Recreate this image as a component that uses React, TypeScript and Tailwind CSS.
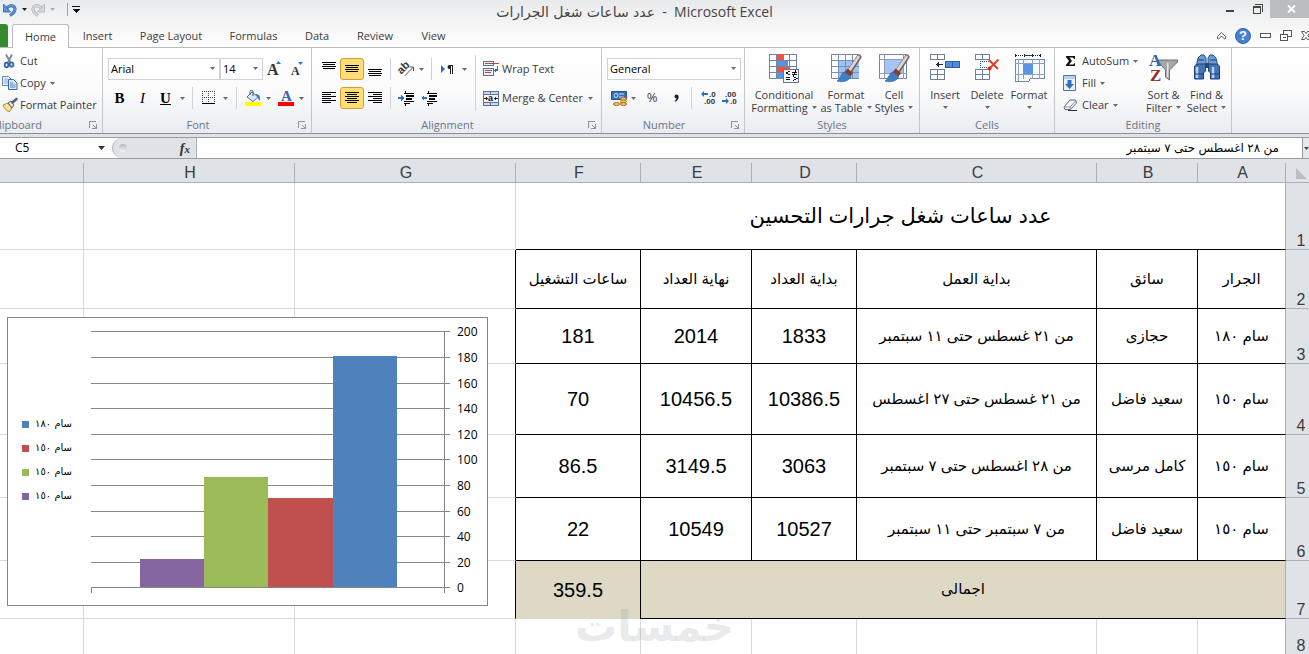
import { useState, type ReactNode } from "react";

const ARABIC = "font-['Liberation_Sans','DejaVu_Sans',sans-serif]";

const tabs = [
  { name: "Insert", width: "w-[57px]" },
  { name: "Page Layout", width: "w-[90px]" },
  { name: "Formulas", width: "w-[75px]" },
  { name: "Data", width: "w-[52px]" },
  { name: "Review", width: "w-[64px]" },
  { name: "View", width: "w-[53px]" },
];

const columns = ["A", "B", "C", "D", "E", "F", "G", "H", ""];

const rows = [
  {
    id: 3,
    height: "h-[55px]",
    cells: ["سام ١٨٠", "حجازى", "من ٢١ غسطس حتى ١١ سبتمبر", "1833", "2014", "181"],
  },
  {
    id: 4,
    height: "h-[71px]",
    cells: ["سام ١٥٠", "سعيد فاضل", "من ٢١ غسطس حتى ٢٧ اغسطس", "10386.5", "10456.5", "70"],
  },
  {
    id: 5,
    height: "h-[63px]",
    cells: ["سام ١٥٠", "كامل مرسى", "من ٢٨ اغسطس حتى ٧ سبتمبر", "3063", "3149.5", "86.5"],
  },
  {
    id: 6,
    height: "h-[63px]",
    cells: ["سام ١٥٠", "سعيد فاضل", "من ٧ سبتمبر حتى ١١ سبتمبر", "10527", "10549", "22"],
  },
];

const series = [
  { name: "سام ١٨٠", value: 181, color: "#4f81bd", x: 326, w: 64 },
  { name: "سام ١٥٠", value: 70, color: "#c0504d", x: 261, w: 65 },
  { name: "سام ١٥٠", value: 86.5, color: "#9bbb59", x: 197, w: 64 },
  { name: "سام ١٥٠", value: 22, color: "#8566a0", x: 133, w: 64 },
];

function Svg({ w, h, crisp, children }: { w: number; h: number; crisp?: boolean; children: ReactNode }) {
  return (
    <svg
      width={w}
      height={h}
      viewBox={`0 0 ${w} ${h}`}
      fill="none"
      className="shrink-0 overflow-visible"
      shapeRendering={crisp ? "crispEdges" : "auto"}
      aria-hidden="true"
    >
      {children}
    </svg>
  );
}

function Arrow({ color = "#6b6b6b" }: { color?: string }) {
  return (
    <Svg w={5} h={3}>
      <path d="M0 0h5L2.5 3z" fill={color} />
    </Svg>
  );
}

function Separator() {
  return <span className="h-[22px] w-px shrink-0 bg-[#d0d3d8]" />;
}

function IconButton({
  label,
  width,
  active,
  children,
}: {
  label: string;
  width: string;
  active?: boolean;
  children: ReactNode;
}) {
  return (
    <button
      aria-label={label}
      className={`flex h-[22px] shrink-0 items-center justify-center ${width} ${
        active ? "rounded-[3px] border border-[#d99a3a] bg-[#ffdf75]" : ""
      }`}
    >
      {children}
    </button>
  );
}

function Group({
  name,
  width,
  launcher,
  clipped,
  children,
}: {
  name: string;
  width: string;
  launcher?: boolean;
  clipped?: boolean;
  children: ReactNode;
}) {
  return (
    <section
      aria-label={name}
      className={`flex h-[85px] shrink-0 flex-col overflow-hidden border-r border-[#c3c7cc] ${width}`}
    >
      <div className="flex flex-1">{children}</div>
      <div className="flex h-4 items-center text-[#6b7583]">
        <span className={clipped ? "-ml-2 flex-1" : "flex-1 text-center"}>{name}</span>
        {launcher && (
          <button aria-label={`${name} settings`} className="flex w-[18px] justify-center">
            <Svg w={8} h={8} crisp>
              <path d="M0 0h7v1H1v6H0z" fill="#8f959d" />
              <path d="M7 3h1v5H3V7h3V6H5V5H4V4h1v1h1v1h1z" fill="#8f959d" />
            </Svg>
          </button>
        )}
      </div>
    </section>
  );
}

function BigButton({
  icon,
  first,
  second,
  width,
}: {
  icon: ReactNode;
  first: string;
  second?: string;
  width: string;
}) {
  return (
    <button className={`flex shrink-0 flex-col items-center pt-[6px] whitespace-nowrap ${width}`}>
      <span className="flex h-[34px] items-start">{icon}</span>
      <span className="leading-[13px]">{first}</span>
      <span className="flex h-[13px] items-center gap-1 leading-[13px]">
        {second}
        <Arrow />
      </span>
    </button>
  );
}

/* horizontal strokes used by all the alignment icons */
function Lines({ bars, h = 12 }: { bars: number[][]; h?: number }) {
  return (
    <Svg w={14} h={h} crisp>
      {bars.map(([x, y, w]) => (
        <rect key={y} x={x} y={y} width={w} height={1} fill="#000" />
      ))}
    </Svg>
  );
}

function Brush() {
  return (
    <g>
      <path d="M28 3L19.500 16" stroke="#70665f" strokeWidth="5" strokeLinecap="round" />
      <path d="M27.500 3L19 15.500" stroke="#dcd7d0" strokeWidth="2.800" strokeLinecap="round" />
      <path d="M15 16.500l5.500 4.500" stroke="#8e3b1d" strokeWidth="5" />
      <path d="M13.500 18c-3 1-3 4-5 6.500-1 1.500-2 2-2.500 2.500 6 2 13-.5 14-5z" fill="#3e7fc8" stroke="#24599c" strokeWidth=".6" />
    </g>
  );
}

function CutIcon() {
  return (
    <Svg w={14} h={16}>
      <path d="M4 1.500l4.500 8M10 1.500L5.500 10" stroke="#7c8794" strokeWidth="1.800" />
      <ellipse cx="4.500" cy="12" rx="1.800" ry="2.400" stroke="#2f65ad" strokeWidth="1.800" />
      <ellipse cx="9.500" cy="11.500" rx="1.800" ry="2.200" stroke="#2f65ad" strokeWidth="1.800" />
    </Svg>
  );
}

function CopyIcon() {
  return (
    <Svg w={16} h={14}>
      <path d="M.5.500h6l3 3v6h-9z" fill="#eef5fd" stroke="#5d86bd" />
      <path d="M2 3h4M2 5h4M2 7h4" stroke="#7fa5d8" />
      <path d="M6.500 3.500h5l3.500 3.500v6.500H6.500z" fill="#d8e8fb" stroke="#3969a8" />
      <path d="M8 7h3M8 9h5.500M8 11h5.500" stroke="#4d7fc0" />
    </Svg>
  );
}

function PainterIcon() {
  return (
    <Svg w={16} h={15}>
      <path d="M1 7l5-2 4 5-3 4C4 12 2 10 1 7z" fill="#f8d878" stroke="#b78a2c" />
      <path d="M2 8l5 4M4 6l4 5" stroke="#fff3c0" />
      <path d="M6 5l3-2 3 4-2 3z" fill="#dfe3e8" stroke="#59616b" />
      <path d="M10.500 4.500L14.500 1" stroke="#53627a" strokeWidth="2.600" strokeLinecap="round" />
    </Svg>
  );
}

function UndoIcon({ color, edge }: { color: string; edge: string }) {
  return (
    <Svg w={14} h={14}>
      <path d="M3.500 5.500C6 2 11 1.500 12 5.500c.5 3-2 5-5 7" stroke={edge} strokeWidth="3" />
      <path d="M3.500 5.500C6 2 11 1.500 12 5.500c.5 3-2 5-5 7" stroke={color} strokeWidth="1.800" />
      <path d="M.5 1v8h7z" fill={color} stroke={edge} strokeWidth=".8" />
    </Svg>
  );
}

function BordersIcon() {
  return (
    <Svg w={14} h={14} crisp>
      <path d="M0 .5h13M0 6.500h13M.5 0v12M6.500 0v12M12.500 0v12" stroke="#444" strokeDasharray="1 1" />
      <path d="M0 12.500h13" stroke="#000" />
    </Svg>
  );
}

function FillColorIcon() {
  return (
    <Svg w={16} h={16}>
      <path d="M2 7l5-5 6 5-5 4.500z" fill="#dce8f5" stroke="#55718f" />
      <path d="M5 5V1.500c0-1.500 3-1.500 3 0V6" stroke="#48586b" />
      <path d="M10 4c4 0 5.500 2 5 6.500-1.500-.5-2-2.500-2.500-4z" fill="#3f76b8" />
      <path d="M0 12h16v4H0z" fill="#ff0" />
    </Svg>
  );
}

function OrientationIcon() {
  return (
    <Svg w={16} h={16}>
      <text x="-1" y="10" fontSize="11" fontWeight="bold" fill="#333" fontFamily="Liberation Sans" transform="rotate(-45 5 8)">
        ab
      </text>
      <path d="M6 14.500L14 6.500M10.500 6h4v4" stroke="#555" />
    </Svg>
  );
}

function IndentIcon({ back }: { back?: boolean }) {
  return (
    <Svg w={16} h={15} crisp>
      <path d="M7.500 0v2M7.500 13v2" stroke="#000" />
      <path d="M6 2h10v1H6zM8 4h8v2H8zM8 7h6v2H8zM6 10h10v1H6zM6 12h6v1H6z" fill="#000" />
      {back ? <path d="M0 7l3-3v2h3v2H3v2z" fill="#2d72c4" /> : <path d="M6 7L3 4v2H0v2h3v2z" fill="#2d72c4" />}
    </Svg>
  );
}

function DirectionIcon() {
  return (
    <Svg w={13} h={10}>
      <path d="M0 1l4 4-4 4z" fill="#2d6cc0" />
      <path d="M12 1H8.500a2 2 0 000 4H9v5h1V2h1v8h1z" fill="#222" />
    </Svg>
  );
}

function WrapIcon() {
  return (
    <Svg w={16} h={16} crisp>
      <path d="M.5.500h10v4H.500zM.5 7.500h10v7H.500z" fill="#edf2fa" stroke="#5d6f92" />
      <path d="M2 2h14v1H2zM2 9h7v1H2zM2 11h6v1H2z" fill="#b5483c" />
      <path d="M15 5v5h-2v2l-2-3 2-2v1h1V5z" fill="#3767ab" />
    </Svg>
  );
}

function MergeIcon() {
  return (
    <Svg w={16} h={15} crisp>
      <path d="M.5.500h15v14H.500z" fill="#c9daf0" stroke="#5d7398" />
      <path d="M0 3.500h16M0 11.500h16M7.500 0v4M7.500 12v3" stroke="#5d7398" />
      <path d="M1 4h14v7H1z" fill="#f3f6fb" />
      <path d="M1 7h4v1H1zM11 7h4v1h-4zM3 6h1v3H3zM12 6h1v3h-1z" fill="#222" />
      <text x="5" y="10" fontSize="9" fontWeight="bold" fill="#111" fontFamily="Liberation Sans">
        a
      </text>
    </Svg>
  );
}

function CurrencyIcon() {
  return (
    <Svg w={17} h={16}>
      <path d="M.5 1.500h15v8H.500z" fill="#3a70b8" stroke="#23508f" />
      <circle cx="5" cy="5.500" r="2" stroke="#cfe0f6" />
      <path d="M8 4h5M8 7h5" stroke="#cfe0f6" />
      <ellipse cx="12.500" cy="9" rx="3" ry="1.600" fill="#f7c568" stroke="#a9681c" />
      <ellipse cx="12.500" cy="11.500" rx="3" ry="1.600" fill="#f7c568" stroke="#a9681c" />
      <ellipse cx="12.500" cy="14" rx="3" ry="1.500" fill="#f7c568" stroke="#a9681c" />
      <ellipse cx="5.500" cy="14" rx="3" ry="1.500" fill="#f7c568" stroke="#a9681c" />
    </Svg>
  );
}

function DecimalIcon({ decrease }: { decrease?: boolean }) {
  return (
    <Svg w={16} h={14}>
      <g fontSize="8" fontWeight="bold" fill="#333" fontFamily="Liberation Sans">
        <text x={decrease ? 3 : 8} y="6">
          {decrease ? ".00" : ".0"}
        </text>
        <text x={decrease ? 8 : 3} y="13">
          {decrease ? ".0" : ".00"}
        </text>
      </g>
      {decrease ? (
        <path d="M7 10L4 7v2H0v2h4v2z" fill="#2d6cc0" />
      ) : (
        <path d="M0 3l3-3v2h4v2H3v2z" fill="#2d6cc0" />
      )}
    </Svg>
  );
}

function ConditionalIcon() {
  return (
    <Svg w={31} h={29} crisp>
      <path d="M.5.500h27v24H.500z" fill="#fff" stroke="#7186a6" />
      <path d="M0 6.500h28M0 12.500h28M0 18.500h28M7.500 0v25M14.500 0v25M20.500 0v25" stroke="#7186a6" />
      <path d="M8 0h6v6H8zM8 13h12v5H8z" fill="#f2523f" />
      <path d="M8 7h11v5H8zM8 19h6v6H8z" fill="#5b92de" />
      <path d="M14.500 15.500h15v13h-15z" fill="#f4f6fa" stroke="#68788f" />
      <g stroke="#111">
        <path d="M21 17l-4 2 4 2M17 23.500h4M17 25.500h4" />
        <path d="M23 18.500h5M23 20.500h5M27 16l-3 6M24 22.500l4 2-4 2" />
      </g>
    </Svg>
  );
}

function FormatTableIcon() {
  return (
    <Svg w={30} h={28}>
      <path d="M.5.500h27v24H.500z" fill="#fff" stroke="#7186a6" />
      <path d="M7 7h21v17H7z" fill="#9dc0f5" />
      <path d="M0 6.500h28M0 12.500h28M0 18.500h28M7.500 0v25M14.500 0v25M21.500 0v25" stroke="#7690b8" />
      <Brush />
    </Svg>
  );
}

function CellStylesIcon() {
  return (
    <Svg w={31} h={28}>
      <path d="M.5.500h27v24H.500z" fill="#fff" stroke="#7186a6" />
      <path d="M0 5.500h28M0 19.500h28M5.500 0v25M24.500 0v25" stroke="#8b9cb5" />
      <path d="M6 6h18v13H6z" fill="#a4c4f7" />
      <Brush />
    </Svg>
  );
}

function InsertIcon() {
  return (
    <Svg w={30} h={28} crisp>
      <path d="M.5.500h14v5H.500zM7.500 0v5M.5 15.500h14v10H.500zM0 20.500h15M7.500 15v11" fill="#fff" stroke="#6e7f99" />
      <path d="M15.500 7.500h14v6h-14z" fill="#4f8de0" stroke="#315f9f" />
      <path d="M22.500 7v7" stroke="#315f9f" />
      <path d="M6 10.500h7M8.500 8v5M7.500 9v3" stroke="#1c2b45" />
    </Svg>
  );
}

function DeleteIcon() {
  return (
    <Svg w={25} h={28}>
      <g shapeRendering="crispEdges">
        <path d="M.5.500h14v5H.500zM7.500 0v5M.5 15.500h14v10H.500zM0 20.500h15M7.500 15v11" fill="#fff" stroke="#6e7f99" />
        <path d="M5 7.500h9M5 13.500h9M5.500 7v7" stroke="#345c9c" strokeDasharray="1 1" />
      </g>
      <path d="M14 6l9 9M23.500 5.500L14 15" stroke="#f03a22" strokeWidth="2" />
      <circle cx="14.500" cy="14.500" r="2" fill="#e02a14" />
    </Svg>
  );
}

function FormatIcon() {
  return (
    <Svg w={31} h={29} crisp>
      <path d="M1.500 0v3M26.500 0v3M18.500 0v3M10.500 0v3" stroke="#222" />
      <path d="M2 1.500h8M19 1.500h7" stroke="#222" strokeDasharray="1 1" />
      <path d="M10 1.500h9" stroke="#1c3c70" />
      <path d="M1.500 5.500h29v19h-14l-2 3h-13z" fill="#f6f9fd" stroke="#7788a3" />
      <path d="M1 9.500h30M1 20.500h30M9.500 5v20M18.500 5v20M25.500 5v20M4.500 5v22" stroke="#93a1b8" />
      <path d="M9 10h10v10H9z" fill="#5d95e2" />
    </Svg>
  );
}

function SortIcon() {
  return (
    <Svg w={30} h={29}>
      <path d="M9.500 6h19v2l-8 8v10l-4-3v-7l-7-8z" fill="#a3a6aa" stroke="#6b6f74" />
      <path d="M18 9v14l1.500 1V9z" fill="#e6e8ea" />
      <g fontSize="17" fontWeight="bold" fontFamily="Liberation Serif">
        <text x="0" y="12" fill="#2d65b3">
          A
        </text>
        <text x="1" y="27" fill="#93302b">
          Z
        </text>
      </g>
    </Svg>
  );
}

function FindIcon() {
  return (
    <Svg w={28} h={27}>
      <path d="M5 4l3-3h3l2 3v9H3zM15 4l2-3h3l3 3 2 9H15z" fill="#6a9bd6" stroke="#284f86" />
      <path d="M1.500 13c0-2 2-3 5-3h6v7l-2 2v6h-9zM26.500 13c0-2-2-3-5-3h-6v7l2 2v6h9z" fill="#4274b8" stroke="#1e3f70" />
      <path d="M4 13v11M20 13v11" stroke="#b8d2f2" strokeWidth="2.500" />
      <path d="M1 20h10M17 20h10M5 6h6M17 6h6" stroke="#1e3f70" />
      <path d="M12 9h4v5h-4z" fill="#24497e" />
    </Svg>
  );
}

function FillIcon() {
  return (
    <Svg w={13} h={16}>
      <path d="M.5.500h12v15H.500z" fill="#eaf2fc" stroke="#4e76ac" />
      <path d="M1 1h11v3H1z" fill="#b8d0ee" />
      <path d="M4.500 5h4v4h2.500l-4.500 5L2 9h2.500z" fill="#2f6fc8" />
    </Svg>
  );
}

function EraserIcon() {
  return (
    <Svg w={15} h={13}>
      <path d="M1 8l6-7h5.500l1 3-6 6.500H2z" fill="#f4f6fa" stroke="#56667f" />
      <path d="M1 8h6l6-6.500M7 8l.5 3" stroke="#8696ad" />
      <path d="M5 11.500h9" stroke="#333" />
    </Svg>
  );
}

function TitleBar() {
  return (
    <header className="flex h-6 items-start">
      <div className="flex h-[19px] w-20 shrink-0 items-center pl-[3px]">
        <button aria-label="Undo">
          <UndoIcon color="#5a94e0" edge="#2c5ea8" />
        </button>
        <button aria-label="Undo history" className="w-[15px] pl-[5px]">
          <Arrow color="#222" />
        </button>
        <button aria-label="Redo" className="ml-[3px] -scale-x-100">
          <UndoIcon color="#d5d8dc" edge="#a9adb2" />
        </button>
        <button aria-label="Redo history" className="w-[15px] pl-[5px]">
          <Arrow color="#b0b0b0" />
        </button>
        <span className="ml-3 h-[13px] w-px shrink-0 bg-[#9ba3ad]" />
        <button aria-label="Customize toolbar" className="ml-1">
          <Svg w={8} h={7} crisp>
            <path d="M0 0h8v1H0zM0 3h8L4 7z" fill="#111" />
          </Svg>
        </button>
      </div>
      <h1 className="flex-1 text-center text-[14px] leading-6 text-[#444]">
        <bdi className="font-['DejaVu_Sans',sans-serif]">عدد ساعات شغل الجرارات</bdi>
        <span> &nbsp;-&nbsp; Microsoft Excel</span>
      </h1>
      <div className="flex w-[120px] shrink-0 justify-end">
        <button aria-label="Minimize" className="flex h-[17px] w-[30px] items-center justify-center pt-1">
          <Svg w={8} h={2} crisp>
            <path d="M0 0h8v2H0z" fill="#444" />
          </Svg>
        </button>
        <button aria-label="Restore" className="flex h-[17px] w-[25px] items-center justify-center">
          <Svg w={10} h={10} crisp>
            <path d="M2 0h8v8H9V1H2z" fill="#444" />
            <path d="M.5 2.500h7v7h-7z" stroke="#444" />
            <path d="M0 2h8v2H0z" fill="#444" />
          </Svg>
        </button>
        <button aria-label="Close" className="flex h-[18px] w-[39px] items-center justify-center bg-[#bcbdbe] pl-1">
          <Svg w={9} h={8}>
            <path d="M1 .5l7 7M8 .5l-7 7" stroke="#fff" strokeWidth="1.800" />
          </Svg>
        </button>
      </div>
    </header>
  );
}

function TabStrip() {
  return (
    <nav className="flex h-6 text-[#3b3b3b]">
      <div className="flex w-3 border-b border-[#b8bcc1]">
        <button aria-label="File" className="w-2 rounded-tr-[3px] bg-[#35892f]" />
      </div>
      <button className="w-[57px] rounded-t-[3px] border border-b-0 border-[#b8bcc1] bg-white pt-px">Home</button>
      {tabs.map((tab) => (
        <button key={tab.name} className={`border-b border-[#b8bcc1] pt-[2px] ${tab.width}`}>
          {tab.name}
        </button>
      ))}
      <div className="flex flex-1 items-center justify-end gap-[9px] border-b border-[#b8bcc1]">
        <button aria-label="Minimize ribbon">
          <Svg w={9} h={8}>
            <path d="M.5 4.500l4-4 4 4v2l-1 .5-3-3-3 3-1-.5z" stroke="#555" fill="#fff" />
          </Svg>
        </button>
        <button
          aria-label="Help"
          className="flex h-4 w-4 items-center justify-center rounded-full border border-[#2f62ad] bg-[#4a80cf] font-['Liberation_Sans',sans-serif] text-[13px] font-bold text-white"
        >
          ?
        </button>
        <button aria-label="Minimize workbook">
          <Svg w={11} h={5} crisp>
            <path d="M.5.500h10v4H.500z" stroke="#555" fill="#fff" />
          </Svg>
        </button>
        <button aria-label="Restore workbook">
          <Svg w={12} h={11} crisp>
            <path d="M3.500.500h8v6h-8z" stroke="#555" fill="#fff" />
            <path d="M.5 4.500h7v6h-7z" stroke="#555" fill="#fff" />
            <path d="M3 7.500h3" stroke="#555" />
          </Svg>
        </button>
        <button aria-label="Close workbook" className="w-2 overflow-hidden">
          <Svg w={10} h={9}>
            <path d="M.5.500h3l1.500 2 1.500-2h3L7 4.500l2.500 4h-3L5 6.500l-1.500 2h-3L3 4.500z" stroke="#555" fill="#fff" />
          </Svg>
        </button>
      </div>
    </nav>
  );
}

function Dropdown({ label, value, width }: { label: string; value: string; width: string }) {
  return (
    <div className={`relative h-[22px] shrink-0 ${width}`}>
      <select
        aria-label={label}
        defaultValue={value}
        className="h-full w-full appearance-none border border-[#cfd2d7] bg-white pl-[2px] text-black outline-none"
      >
        <option>{value}</option>
      </select>
      <span className="pointer-events-none absolute top-[9px] right-[5px]">
        <Arrow />
      </span>
    </div>
  );
}

function Ribbon() {
  return (
    <div className="flex overflow-hidden border-b border-[#8b9097] bg-linear-to-b from-white via-[#fbfbfc] to-[#e9ecf0] text-[#3b3b3b]">
      <Group name="Clipboard" width="w-[103px]" launcher clipped>
        <div className="flex flex-col pt-[2px] pl-[2px] whitespace-nowrap">
          <button className="flex h-[22px] items-center gap-1">
            <CutIcon />
            Cut
          </button>
          <button className="flex h-[22px] items-center gap-[2px]">
            <CopyIcon />
            Copy
            <span className="pl-[2px]">
              <Arrow />
            </span>
          </button>
          <button className="flex h-[22px] items-center gap-[2px]">
            <PainterIcon />
            Format Painter
          </button>
        </div>
      </Group>

      <Group name="Font" width="w-[209px]" launcher>
        <div className="flex flex-col gap-[7px] pt-[10px] pl-[5px]">
          <div className="flex">
            <Dropdown label="Font name" value="Arial" width="w-[112px]" />
            <Dropdown label="Font size" value="14" width="w-[43px]" />
            <IconButton label="Grow font" width="w-[23px]">
              <Svg w={15} h={14}>
                <text x="0" y="13" fontSize="16" fontWeight="bold" fill="#333" fontFamily="Liberation Serif">
                  A
                </text>
                <path d="M9 2h5l-2.500-3z" fill="#2d6cc0" />
              </Svg>
            </IconButton>
            <IconButton label="Shrink font" width="w-[21px]">
              <Svg w={13} h={14}>
                <text x="1" y="13" fontSize="12" fontWeight="bold" fill="#333" fontFamily="Liberation Serif">
                  A
                </text>
                <path d="M8 0h5l-2.500 3z" fill="#2d6cc0" />
              </Svg>
            </IconButton>
          </div>
          <div className="flex items-center font-['Liberation_Serif',serif] text-[15px] text-black">
            <IconButton label="Bold" width="w-[23px]">
              <b>B</b>
            </IconButton>
            <IconButton label="Italic" width="w-[23px]">
              <i>I</i>
            </IconButton>
            <IconButton label="Underline" width="w-[23px]">
              <b className="underline">U</b>
            </IconButton>
            <IconButton label="Underline style" width="w-[10px]">
              <Arrow />
            </IconButton>
            <span className="flex w-[11px] justify-center">
              <Separator />
            </span>
            <IconButton label="Borders" width="w-[22px]">
              <BordersIcon />
            </IconButton>
            <IconButton label="Border style" width="w-[10px]">
              <Arrow />
            </IconButton>
            <span className="flex w-[13px] justify-center">
              <Separator />
            </span>
            <IconButton label="Fill color" width="w-[20px]">
              <FillColorIcon />
            </IconButton>
            <IconButton label="Fill colors" width="w-[11px]">
              <Arrow />
            </IconButton>
            <IconButton label="Font color" width="w-[23px]">
              <Svg w={16} h={16}>
                <text x="3" y="11" fontSize="15" fontWeight="bold" fill="#3a62a5" fontFamily="Liberation Serif">
                  A
                </text>
                <path d="M0 12h16v4H0z" fill="#f00" />
              </Svg>
            </IconButton>
            <IconButton label="Font colors" width="w-[8px]">
              <Arrow />
            </IconButton>
          </div>
        </div>
      </Group>

      <Group name="Alignment" width="w-[290px]" launcher>
        <div className="flex flex-col gap-[7px] pt-[10px] pl-[6px]">
          <div className="flex items-center">
            <IconButton label="Top align" width="w-[22px]">
              <Lines bars={[[0, 0, 14], [1, 2, 12], [0, 4, 14], [1, 6, 12]]} h={14} />
            </IconButton>
            <IconButton label="Middle align" width="w-[24px]" active>
              <Lines bars={[[0, 3, 14], [1, 5, 12], [0, 7, 14], [1, 9, 12]]} h={14} />
            </IconButton>
            <IconButton label="Bottom align" width="w-[22px]">
              <Lines bars={[[0, 7, 14], [1, 9, 12], [0, 11, 14], [1, 13, 12]]} h={14} />
            </IconButton>
            <span className="flex w-[9px] justify-center">
              <Separator />
            </span>
            <IconButton label="Orientation" width="w-[24px]">
              <OrientationIcon />
            </IconButton>
            <Arrow />
            <span className="flex w-[15px] justify-center">
              <Separator />
            </span>
            <IconButton label="Text direction" width="w-[17px]">
              <DirectionIcon />
            </IconButton>
            <span className="pl-[6px]">
              <Arrow />
            </span>
          </div>
          <div className="flex items-center">
            <IconButton label="Align left" width="w-[22px]">
              <Lines bars={[[0, 0, 14], [0, 2, 9], [0, 4, 14], [0, 6, 9], [0, 8, 14], [0, 10, 9]]} />
            </IconButton>
            <IconButton label="Center" width="w-[24px]" active>
              <Lines bars={[[0, 0, 14], [2, 2, 10], [0, 4, 14], [2, 6, 10], [0, 8, 14], [2, 10, 10]]} />
            </IconButton>
            <IconButton label="Align right" width="w-[22px]">
              <Lines bars={[[0, 0, 14], [5, 2, 9], [0, 4, 14], [5, 6, 9], [0, 8, 14], [5, 10, 9]]} />
            </IconButton>
            <span className="flex w-[9px] justify-center">
              <Separator />
            </span>
            <IconButton label="Increase indent" width="w-[22px]">
              <IndentIcon />
            </IconButton>
            <IconButton label="Decrease indent" width="w-[23px]">
              <IndentIcon back />
            </IconButton>
          </div>
        </div>
        <span className="mt-[7px] ml-2 h-[56px] w-px bg-[#d0d3d8]" />
        <div className="flex flex-col gap-[7px] pt-[10px] pl-[7px] whitespace-nowrap">
          <button className="flex h-[22px] items-center gap-[3px]">
            <WrapIcon />
            Wrap Text
          </button>
          <button className="flex h-[22px] items-center gap-[3px]">
            <MergeIcon />
            Merge &amp; Center
            <span className="pl-[2px]">
              <Arrow />
            </span>
          </button>
        </div>
      </Group>

      <Group name="Number" width="w-[143px]" launcher>
        <div className="flex flex-col gap-[7px] pt-[10px] pl-[5px]">
          <Dropdown label="Number format" value="General" width="w-[134px]" />
          <div className="flex items-center">
            <IconButton label="Accounting format" width="w-[24px]">
              <CurrencyIcon />
            </IconButton>
            <Arrow />
            <IconButton label="Percent style" width="w-[32px]">
              <span className="text-[13px]">%</span>
            </IconButton>
            <IconButton label="Comma style" width="w-[16px]">
              <Svg w={5} h={8}>
                <circle cx="2.500" cy="2.500" r="2" fill="#222" />
                <path d="M4.500 2.500C4.800 5 3.500 7 1 7.800L.5 7C2 6 2.600 5 2.500 4z" fill="#222" />
              </Svg>
            </IconButton>
            <span className="flex w-[15px] justify-center">
              <Separator />
            </span>
            <IconButton label="Increase decimal" width="w-[20px]">
              <DecimalIcon />
            </IconButton>
            <IconButton label="Decrease decimal" width="w-[22px]">
              <DecimalIcon decrease />
            </IconButton>
          </div>
        </div>
      </Group>

      <Group name="Styles" width="w-[175px]">
        <div className="flex pl-1">
          <BigButton width="w-[70px]" icon={<ConditionalIcon />} first="Conditional" second="Formatting" />
          <BigButton width="w-[54px]" icon={<FormatTableIcon />} first="Format" second="as Table" />
          <BigButton width="w-[42px]" icon={<CellStylesIcon />} first="Cell" second="Styles" />
        </div>
      </Group>

      <Group name="Cells" width="w-[135px]">
        <div className="flex pl-1">
          <BigButton width="w-[42px]" icon={<InsertIcon />} first="Insert" />
          <BigButton width="w-[42px]" icon={<DeleteIcon />} first="Delete" />
          <BigButton width="w-[42px]" icon={<FormatIcon />} first="Format" />
        </div>
      </Group>

      <Group name="Editing" width="w-[177px]">
        <div className="flex w-[87px] flex-col pt-[2px] pl-2 whitespace-nowrap">
          <button className="flex h-[22px] items-center gap-1">
            <span className="flex w-[15px] justify-center">
              <Svg w={9} h={10}>
                <path d="M0 0h9v3H8L7 1.500H3.500L6 5 3 8.500h4.500L8.500 7H9v3H0V9l3-4L0 1z" fill="#111" />
              </Svg>
            </span>
            AutoSum
            <Arrow />
          </button>
          <button className="flex h-[22px] items-center gap-1">
            <span className="flex w-[15px]">
              <FillIcon />
            </span>
            Fill
            <Arrow />
          </button>
          <button className="flex h-[22px] items-center gap-1">
            <EraserIcon />
            Clear
            <Arrow />
          </button>
        </div>
        <BigButton width="w-[43px]" icon={<SortIcon />} first="Sort &amp;" second="Filter" />
        <BigButton width="w-[43px]" icon={<FindIcon />} first="Find &amp;" second="Select" />
      </Group>
    </div>
  );
}

function FormulaBar() {
  const [formula, setFormula] = useState("من ٢٨ اغسطس حتى ٧ سبتمبر");

  return (
    <div className="bg-[#dfe3e8] pt-[3px] pb-1">
      <div className="flex h-[22px] border-y border-[#979ca3] bg-white">
        <input
          aria-label="Name box"
          defaultValue="C5"
          className="w-[98px] pl-[15px] text-[12px] text-black outline-none"
        />
        <button aria-label="Named ranges" className="flex w-[14px] items-center">
          <Svg w={7} h={4}>
            <path d="M0 0h7L3.500 4z" fill="#333" />
          </Svg>
        </button>
        <div className="flex w-[85px] items-center justify-between rounded-l-full border border-y-0 border-[#a9aeb5] bg-[#dfe2e7] px-[6px]">
          <span className="h-2 w-2 rounded-full bg-linear-to-b from-[#b3b8bf] to-[#f3f5f7]" />
          <button
            aria-label="Insert function"
            className="font-['Liberation_Serif',serif] text-[14px] font-bold text-[#333] italic"
          >
            f<span className="text-[11px]">x</span>
          </button>
        </div>
        <input
          aria-label="Formula"
          dir="rtl"
          value={formula}
          onChange={(e) => setFormula(e.target.value)}
          className={`min-w-0 flex-1 pr-[23px] text-[12px] text-black outline-none ${ARABIC}`}
        />
        <button
          aria-label="Expand formula bar"
          className="flex w-[7px] items-center justify-center overflow-hidden border-l border-[#979ca3] bg-[#e4e7eb]"
        >
          <Arrow color="#444" />
        </button>
      </div>
    </div>
  );
}

function Chart() {
  const ticks = [200, 180, 160, 140, 120, 100, 80, 60, 40, 20, 0];
  const yOf = (v: number) => Math.ceil(270 - v * 1.28);

  return (
    <svg
      width="481"
      height="289"
      viewBox="0 0 481 289"
      className="absolute top-[154px] left-[7px]"
      role="img"
      aria-label="ساعات التشغيل"
    >
      <g shapeRendering="crispEdges">
        <rect x="0.500" y="0.500" width="480" height="288" fill="#fff" stroke="#868686" />
        {ticks.map((t) => (
          <rect key={t} x="84" y={yOf(t)} width="359" height="1" fill="#868686" />
        ))}
        {series.map((s) => (
          <rect key={s.x} x={s.x} y={yOf(s.value)} width={s.w} height={270 - yOf(s.value)} fill={s.color} />
        ))}
        <path d="M437.500 14v262M84.500 270v6" stroke="#868686" />
        {series.map((s, i) => (
          <rect key={i} x="15" y={104 + i * 24} width="7" height="7" fill={s.color} />
        ))}
      </g>
      <g fontSize="12" fontFamily="Open Sans, sans-serif" fill="#000">
        {ticks.map((t) => (
          <text key={t} x="450" y={yOf(t) + 5}>
            {t}
          </text>
        ))}
      </g>
      <g fontSize="10" fontFamily="DejaVu Sans, sans-serif" fill="#000">
        {series.map((s, i) => (
          <text key={i} x="65" y={110 + i * 24} direction="rtl">
            {s.name}
          </text>
        ))}
      </g>
    </svg>
  );
}

function RowHeader({ id, last }: { id: number; last?: boolean }) {
  return (
    <th
      scope="row"
      className={`border-[#a9b0b9] bg-[#dfe3e8] pl-[7px] text-center align-bottom text-[16px] leading-4 font-normal text-[#3b3b3b] ${
        last ? "" : "border-b"
      }`}
    >
      {id}
    </th>
  );
}

/* the empty G, H and I cells that end each row */
function EmptyCells({ edge }: { edge: string }) {
  return (
    <>
      <td className={`border-r border-b border-b-[#d9dadb] ${edge}`} />
      <td className="border-r border-b border-[#d9dadb]" />
      <td className="border-r border-b border-[#d9dadb]" />
    </>
  );
}

function Sheet() {
  const headings = ["الجرار", "سائق", "بداية العمل", "بداية العداد", "نهاية العداد", "ساعات التشغيل"];

  return (
    <main className="relative overflow-hidden">
      <table
        dir="rtl"
        className={`w-full table-fixed border-separate border-spacing-0 text-center text-black ${ARABIC}`}
      >
        <colgroup>
          <col className="w-[23px]" />
          <col className="w-[88px]" />
          <col className="w-[101px]" />
          <col className="w-[240px]" />
          <col className="w-[105px]" />
          <col className="w-[111px]" />
          <col className="w-[125px]" />
          <col className="w-[221px]" />
          <col className="w-[211px]" />
          <col />
        </colgroup>
        <thead>
          <tr className="h-5 bg-[#dfe3e8] text-[16px] leading-[18px] text-[#3b3b3b]">
            <th className="border-b border-[#a9b0b9]">
              <Svg w={18} h={14}>
                <path d="M5 2v11h11z" fill="#b9bec5" />
              </Svg>
            </th>
            {columns.map((c, i) => (
              <th key={i} scope="col" className="border-r border-b border-[#a9b0b9] pl-[2px] font-normal">
                {c}
              </th>
            ))}
          </tr>
        </thead>
        <tbody>
          <tr className="h-[67px]">
            <RowHeader id={1} />
            <td colSpan={6} className="border-r border-b border-r-[#a9b0b9] border-b-black text-[21px]">
              عدد ساعات شغل جرارات التحسين
            </td>
            <EmptyCells edge="border-r-[#d9dadb]" />
          </tr>
          <tr className="h-[59px]">
            <RowHeader id={2} />
            {headings.map((h, i) => (
              <td
                key={h}
                className={`border-r border-b border-b-black text-[15px] whitespace-nowrap ${
                  i === 0 ? "border-r-[#a9b0b9]" : "border-r-black"
                }`}
              >
                {h}
              </td>
            ))}
            <EmptyCells edge="border-r-black" />
          </tr>
          {rows.map((row) => (
            <tr key={row.id} className={row.height}>
              <RowHeader id={row.id} />
              {row.cells.map((cell, i) => (
                <td
                  key={i}
                  className={`border-r border-b border-b-black whitespace-nowrap ${
                    i === 0 ? "border-r-[#a9b0b9]" : "border-r-black"
                  } ${i > 2 ? "text-[20px]" : "text-[15px]"}`}
                >
                  {cell}
                </td>
              ))}
              <EmptyCells edge="border-r-black" />
            </tr>
          ))}
          <tr className="h-[58px]">
            <RowHeader id={7} />
            <td
              colSpan={5}
              className="border-r border-b border-r-[#a9b0b9] border-b-black bg-[#ddd9c4] text-[15px]"
            >
              اجمالى
            </td>
            <td className="border-r border-black bg-[#ddd9c4] text-[20px]">359.5</td>
            <EmptyCells edge="border-r-black" />
          </tr>
          <tr className="h-[35px]">
            <RowHeader id={8} last />
            {columns.map((c, i) => (
              <td key={i} className={`border-r ${i === 0 ? "border-[#a9b0b9]" : "border-[#d9dadb]"}`} />
            ))}
          </tr>
        </tbody>
      </table>
      <Chart />
      <div
        dir="rtl"
        className="pointer-events-none absolute top-[432px] left-[575px] font-['DejaVu_Sans',sans-serif] text-[42px] font-bold text-[#8a8f96]/20"
      >
        خمسات
      </div>
    </main>
  );
}

export default function App() {
  return (
    <div className="overflow-hidden bg-white font-['Open_Sans',sans-serif] text-[11px]">
      <div className="bg-linear-to-b from-[#e9eaeb] to-white">
        <TitleBar />
        <TabStrip />
      </div>
      <Ribbon />
      <FormulaBar />
      <Sheet />
    </div>
  );
}
